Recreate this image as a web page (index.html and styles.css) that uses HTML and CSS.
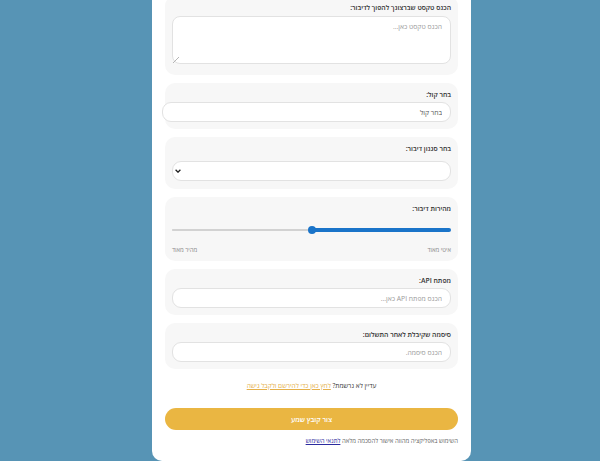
FILE: index.html
```html
<!DOCTYPE html>
<html lang="he" dir="rtl">
<head>
<meta charset="utf-8">
<link rel="stylesheet" href="styles.css">
</head>
<body>
<div class="page">
  <main class="card">
    <section class="field field-text">
      <label class="label">הכנס טקסט שברצונך להפוך לדיבור:</label>
      <textarea class="textarea" placeholder="הכנס טקסט כאן..."></textarea>
    </section>
    <section class="field">
      <label class="label">בחר קול:</label>
      <input class="input input-wide" type="text" value="בחר קול">
    </section>
    <section class="field field-select">
      <label class="label">בחר סגנון דיבור:</label>
      <select class="select"><option></option></select>
    </section>
    <section class="field field-range">
      <label class="label">מהירות דיבור:</label>
      <input class="range" type="range" min="0" max="100" value="50">
      <div class="range-labels"><span>איטי מאוד</span><span>מהיר מאוד</span></div>
    </section>
    <section class="field">
      <label class="label">מפתח API:</label>
      <input class="input" type="text" placeholder="הכנס מפתח API כאן...">
    </section>
    <section class="field">
      <label class="label">סיסמה שקיבלת לאחר התשלום:</label>
      <input class="input" type="password" placeholder="הכנס סיסמה.">
    </section>
    <p class="register">עדיין לא נרשמת? <a class="register-link" href="#">לחץ כאן כדי להירשם ולקבל גישה</a></p>
    <button class="submit" type="button">צור קובץ שמע</button>
    <p class="terms">השימוש באפליקציה מהווה אישור להסכמה מלאה <a class="terms-link" href="#">לתנאי השימוש</a></p>
  </main>
</div>
</body>
</html>
```
FILE: styles.css
```css
* { box-sizing: border-box; }
html, body {
  margin: 0;
  padding: 0;
  background: #5794b5;
  height: 461px;
  overflow: hidden;
}
body {
  font-family: "Open Sans", "DejaVu Sans", "Liberation Sans", sans-serif;
  font-size: 7px;
  color: #333;
}
.page {
  display: flex;
  justify-content: flex-start;
  padding-right: 129px;
}
.card {
  width: 319px;
  margin-top: -20px;
  background: #fff;
  border-radius: 0 0 10px 10px;
  padding: 16px 13px 14px;
  display: flex;
  flex-direction: column;
  gap: 8px;
}
.field {
  background: #f7f7f7;
  border-radius: 10px;
  padding: 6px 7px 7px;
  display: flex;
  flex-direction: column;
}
.label {
  display: block;
  font-weight: 600;
  font-size: 6.8px;
  line-height: 12px;
  color: #333;
  margin-bottom: 1px;
}
.field-text { padding-bottom: 11px; }
.textarea {
  height: 48px;
  margin-top: 1px;
  border: 1px solid #e2e2e2;
  border-radius: 8px;
  background: #fff;
  padding: 5px 8px;
  font: inherit;
  font-size: 6.8px;
  resize: vertical;
}
.textarea::-webkit-resizer {
  background: linear-gradient(135deg, transparent 45%, #b5b5b5 45%, #b5b5b5 55%, transparent 55%) no-repeat left bottom / 6px 6px;
}
.input, .select {
  height: 20px;
  border: 1px solid #e2e2e2;
  border-radius: 9px;
  background: #fff;
  padding: 0 8px;
  font: inherit;
  font-size: 6.8px;
  color: #555;
}
.input-wide {
  width: calc(100% + 10px);
  margin-left: -10px;
}
::placeholder { color: #9a9a9a; }
.field-select { padding-bottom: 8px; }
.select {
  margin-top: 5px;
  padding: 0 4px;
  -webkit-appearance: none;
  appearance: none;
  background: #fff url("data:image/svg+xml,%3Csvg xmlns='http://www.w3.org/2000/svg' width='6' height='4' viewBox='0 0 6 4'%3E%3Cpath d='M0.6 0.8 L3 3.2 L5.4 0.8' fill='none' stroke='%23222' stroke-width='1.3'/%3E%3C/svg%3E") no-repeat left 2px center;
}
.field-range { padding-bottom: 5px; }
.range {
  -webkit-appearance: none;
  appearance: none;
  width: 100%;
  height: 4px;
  margin: 12px 0 6px;
  border-radius: 2px;
  background:
    linear-gradient(to left, #1a74c9 50%, transparent 50%),
    linear-gradient(#d2d2d2, #d2d2d2) no-repeat center / 100% 2px;
  outline: none;
}
.range::-webkit-slider-thumb {
  -webkit-appearance: none;
  appearance: none;
  width: 8px;
  height: 8px;
  border-radius: 50%;
  background: #1a74c9;
  border: 0;
}
.range-labels {
  display: flex;
  justify-content: space-between;
  font-size: 6px;
  line-height: 12px;
  color: #888;
  margin-top: 6px;
}
.register {
  margin: 0;
  text-align: center;
  line-height: 12px;
  font-size: 6.5px;
  color: #333;
  padding-top: 3px;
}
.register-link { color: #e5b04a; }
.submit {
  margin-top: 8px;
  height: 22px;
  border: 0;
  border-radius: 11px;
  background: #eab642;
  color: #fff;
  font: inherit;
  font-weight: 600;
  font-size: 7px;
}
.terms {
  margin: -3px 0 0;
  line-height: 12px;
  font-size: 6px;
  color: #666;
}
.terms-link { color: #2b2b9e; }
```
